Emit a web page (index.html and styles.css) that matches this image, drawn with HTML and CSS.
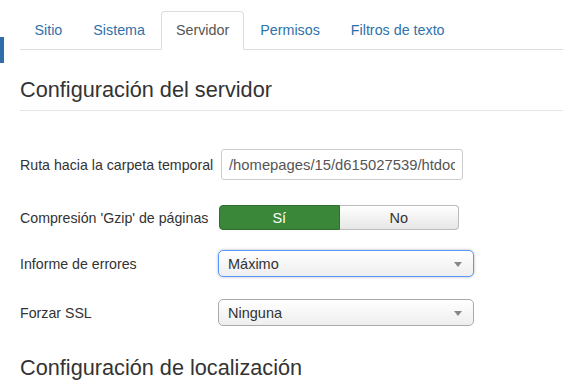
FILE: index.html
```html
<!DOCTYPE html>
<html lang="es">
<head>
    <meta charset="UTF-8">
    <meta name="viewport" content="width=device-width, initial-scale=1.0">
    <title>Configuración global</title>
    <link rel="stylesheet" href="styles.css">
</head>
<body>

    <div class="sidetoggle"></div>

    <div class="page">
        <ul class="tabs">
            <li><a href="#">Sitio</a></li>
            <li><a href="#">Sistema</a></li>
            <li class="active"><a href="#">Servidor</a></li>
            <li><a href="#">Permisos</a></li>
            <li><a href="#">Filtros de texto</a></li>
        </ul>

        <fieldset class="group">
            <h2 class="legend">Configuración del servidor</h2>

            <div class="row first">
                <label class="label">Ruta hacia la carpeta temporal</label>
                <input class="text" type="text" value="/homepages/15/d615027539/htdocs/tmp">
            </div>

            <div class="row gzip">
                <label class="label">Compresión 'Gzip' de páginas</label>
                <div class="toggle">
                    <span class="yes">Sí</span>
                    <span class="no">No</span>
                </div>
            </div>

            <div class="row errors">
                <label class="label">Informe de errores</label>
                <div class="select focus">Máximo<span class="caret"></span></div>
            </div>

            <div class="row ssl">
                <label class="label">Forzar SSL</label>
                <div class="select">Ninguna<span class="caret"></span></div>
            </div>
        </fieldset>

        <fieldset class="group next">
            <h2 class="legend">Configuración de localización</h2>
        </fieldset>
    </div>

</body>
</html>
```

FILE: styles.css
```css
*{
    margin: 0px;
    padding: 0px;
    box-sizing: border-box;
}
body{
    font-family: "Liberation Sans", Arial, sans-serif;
    color: #333333;
    background: #ffffff;
    overflow: hidden;
}
.sidetoggle{
    position: absolute;
    left: 0;
    top: 37px;
    width: 4px;
    height: 26px;
    background: #2f6ea8;
}
.page{
    padding-left: 20px;
}
.tabs{
    display: flex;
    list-style: none;
    padding-top: 11px;
    border-bottom: 1px solid #dddddd;
}
.tabs li{
    margin-right: 2px;
    margin-bottom: -1px;
}
.tabs a{
    display: block;
    padding: 9px 13.5px;
    line-height: 19px;
    font-size: 14.3px;
    color: #3071a9;
    text-decoration: none;
    border: 1px solid transparent;
    border-radius: 4px 4px 0 0;
}
.tabs .active a{
    color: #555555;
    background: #ffffff;
    border-color: #dddddd #dddddd transparent;
}
.group{
    border: none;
}
.legend{
    font-size: 21.7px;
    font-weight: normal;
    line-height: 24px;
    padding-top: 28px;
    padding-bottom: 8px;
    border-bottom: 1px solid #e5e5e5;
    color: #333333;
}
.group.next{
    margin-top: 2px;
}
.row{
    display: flex;
    align-items: center;
}
.row.first{
    margin-top: 38px;
}
.row.gzip{
    margin-top: 25px;
}
.row.errors{
    margin-top: 20px;
}
.row.ssl{
    margin-top: 22px;
}
.label{
    width: 200px;
    font-size: 14.2px;
}
.text{
    width: 242px;
    height: 31px;
    padding: 0 7px;
    border: 1px solid #cccccc;
    border-radius: 3px;
    font: 14.8px "Liberation Sans", Arial, sans-serif;
    color: #555555;
    margin-left: 1px;
}
.toggle{
    display: flex;
    width: 240px;
    height: 25px;
    margin-left: -1px;
    font-size: 14.5px;
}
.toggle span{
    flex: 1;
    display: flex;
    align-items: center;
    justify-content: center;
}
.yes{
    background: #3a873a;
    color: #ffffff;
    border: 1px solid #2e6f2e;
    border-radius: 4px 0 0 4px;
}
.no{
    background: linear-gradient(#ffffff, #e6e6e6);
    color: #333333;
    border: 1px solid #bbbbbb;
    border-left: none;
    border-radius: 0 4px 4px 0;
}
.select{
    position: relative;
    width: 256px;
    height: 27px;
    margin-left: -2px;
    padding: 0 9px;
    display: flex;
    align-items: center;
    font-size: 14.5px;
    color: #333333;
    background: linear-gradient(#ffffff, #eeeeee);
    border: 1px solid #aaaaaa;
    border-radius: 5px;
}
.select.focus{
    border-color: #5897fb;
    box-shadow: 0 0 3px rgba(0, 0, 0, 0.3);
}
.caret{
    position: absolute;
    right: 11px;
    top: 11px;
    border-left: 4px solid transparent;
    border-right: 4px solid transparent;
    border-top: 5px solid #888888;
}
```
